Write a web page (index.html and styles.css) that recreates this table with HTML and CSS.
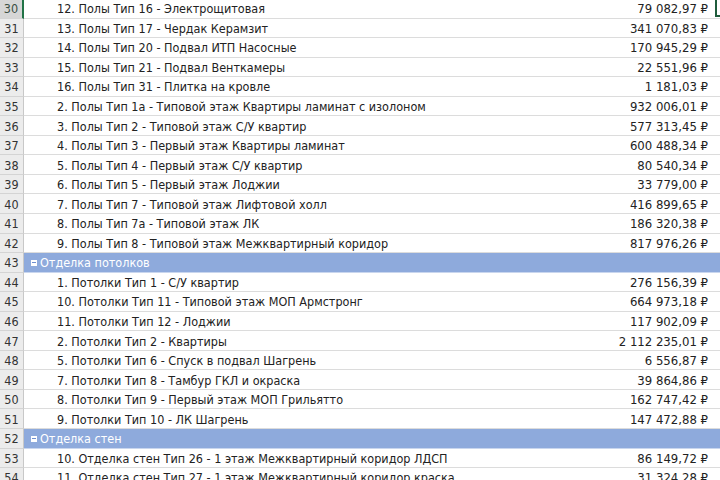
FILE: index.html
```html
<!DOCTYPE html>
<html lang="ru">
<head>
<meta charset="utf-8">
<link rel="stylesheet" href="styles.css">
</head>
<body>
<div class="sheet">
  <div class="row active"><div class="rh">30</div><div class="cell"><span class="name">12. Полы Тип 16 - Электрощитовая</span><span class="val">79 082,97 ₽</span></div><div class="sel"></div></div>
  <div class="row"><div class="rh">31</div><div class="cell"><span class="name">13. Полы Тип 17 - Чердак Керамзит</span><span class="val">341 070,83 ₽</span></div></div>
  <div class="row"><div class="rh">32</div><div class="cell"><span class="name">14. Полы Тип 20 - Подвал ИТП Насосные</span><span class="val">170 945,29 ₽</span></div></div>
  <div class="row"><div class="rh">33</div><div class="cell"><span class="name">15. Полы Тип 21 - Подвал Венткамеры</span><span class="val">22 551,96 ₽</span></div></div>
  <div class="row"><div class="rh">34</div><div class="cell"><span class="name">16. Полы Тип 31 - Плитка на кровле</span><span class="val">1 181,03 ₽</span></div></div>
  <div class="row"><div class="rh">35</div><div class="cell"><span class="name">2. Полы Тип 1а - Типовой этаж Квартиры ламинат с изолоном</span><span class="val">932 006,01 ₽</span></div></div>
  <div class="row"><div class="rh">36</div><div class="cell"><span class="name">3. Полы Тип 2 - Типовой этаж С/У квартир</span><span class="val">577 313,45 ₽</span></div></div>
  <div class="row"><div class="rh">37</div><div class="cell"><span class="name">4. Полы Тип 3 - Первый этаж Квартиры ламинат</span><span class="val">600 488,34 ₽</span></div></div>
  <div class="row"><div class="rh">38</div><div class="cell"><span class="name">5. Полы Тип 4 - Первый этаж С/У квартир</span><span class="val">80 540,34 ₽</span></div></div>
  <div class="row"><div class="rh">39</div><div class="cell"><span class="name">6. Полы Тип 5 - Первый этаж Лоджии</span><span class="val">33 779,00 ₽</span></div></div>
  <div class="row"><div class="rh">40</div><div class="cell"><span class="name">7. Полы Тип 7 - Типовой этаж Лифтовой холл</span><span class="val">416 899,65 ₽</span></div></div>
  <div class="row"><div class="rh">41</div><div class="cell"><span class="name">8. Полы Тип 7а - Типовой этаж ЛК</span><span class="val">186 320,38 ₽</span></div></div>
  <div class="row"><div class="rh">42</div><div class="cell"><span class="name">9. Полы Тип 8 - Типовой этаж Межквартирный коридор</span><span class="val">817 976,26 ₽</span></div></div>
  <div class="row"><div class="rh">43</div><div class="cell group"><span class="toggle"></span><span class="gname">Отделка потолков</span></div></div>
  <div class="row"><div class="rh">44</div><div class="cell"><span class="name">1. Потолки Тип 1 - С/У квартир</span><span class="val">276 156,39 ₽</span></div></div>
  <div class="row"><div class="rh">45</div><div class="cell"><span class="name">10. Потолки Тип 11 - Типовой этаж МОП Армстронг</span><span class="val">664 973,18 ₽</span></div></div>
  <div class="row"><div class="rh">46</div><div class="cell"><span class="name">11. Потолки Тип 12 - Лоджии</span><span class="val">117 902,09 ₽</span></div></div>
  <div class="row"><div class="rh">47</div><div class="cell"><span class="name">2. Потолки Тип 2 - Квартиры</span><span class="val">2 112 235,01 ₽</span></div></div>
  <div class="row"><div class="rh">48</div><div class="cell"><span class="name">5. Потолки Тип 6 - Спуск в подвал Шагрень</span><span class="val">6 556,87 ₽</span></div></div>
  <div class="row"><div class="rh">49</div><div class="cell"><span class="name">7. Потолки Тип 8 - Тамбур ГКЛ и окраска</span><span class="val">39 864,86 ₽</span></div></div>
  <div class="row"><div class="rh">50</div><div class="cell"><span class="name">8. Потолки Тип 9 - Первый этаж МОП Грильятто</span><span class="val">162 747,42 ₽</span></div></div>
  <div class="row"><div class="rh">51</div><div class="cell"><span class="name">9. Потолки Тип 10 - ЛК Шагрень</span><span class="val">147 472,88 ₽</span></div></div>
  <div class="row"><div class="rh">52</div><div class="cell group"><span class="toggle"></span><span class="gname">Отделка стен</span></div></div>
  <div class="row"><div class="rh">53</div><div class="cell"><span class="name">10. Отделка стен Тип 26 - 1 этаж Межквартирный коридор ЛДСП</span><span class="val">86 149,72 ₽</span></div></div>
  <div class="row"><div class="rh">54</div><div class="cell"><span class="name">11. Отделка стен Тип 27 - 1 этаж Межквартирный коридор краска</span><span class="val">31 324,28 ₽</span></div></div>
</div>
</body>
</html>
```
FILE: styles.css
```css
html, body {
  margin: 0;
  padding: 0;
  background: #fff;
  overflow: hidden;
}
body {
  width: 720px;
  height: 480px;
  font-family: "DejaVu Sans Condensed", "DejaVu Sans", sans-serif;
  font-size: 12.5px;
  color: #222;
}
.sheet {
  margin-top: -1px;
  display: flex;
  flex-direction: column;
}
.row {
  position: relative;
  display: flex;
  height: 19.56px;
  flex: none;
}
.rh {
  width: 24px;
  flex: none;
  background: #ececec;
  border-right: 1px solid #c8c8c8;
  border-bottom: 1px solid #d4d4d4;
  box-sizing: border-box;
  display: flex;
  align-items: center;
  justify-content: center;
  color: #333;
  font-size: 12.5px;
  padding-top: 1px;
}
.active .rh {
  background: #d6d6d6;
  border-right: 2px solid #217346;
  color: #3b4f44;
}
.cell {
  flex: 1;
  display: flex;
  align-items: center;
  border-bottom: 1px solid #dcdcdc;
  box-sizing: border-box;
  padding: 1px 12px 0 33px;
  white-space: nowrap;
  min-width: 0;
}
.name {
  flex: 1;
}
.val {
  flex: none;
  font-size: 13px;
}
.group {
  background: #8eaadc;
  color: #fff;
  padding-left: 7px;
  border-bottom: 1px solid #c9d6ee;
}
.toggle {
  width: 6px;
  height: 6px;
  background: #fff;
  position: relative;
  margin-right: 3px;
  flex: none;
}
.toggle::after {
  content: "";
  position: absolute;
  left: 1px;
  right: 1px;
  top: 2.5px;
  height: 1px;
  background: #6f8fcf;
}
.sel {
  position: absolute;
  left: 715px;
  top: -2px;
  width: 30px;
  height: 20px;
  border: 2px solid #1f5c3c;
  box-sizing: border-box;
}
```
